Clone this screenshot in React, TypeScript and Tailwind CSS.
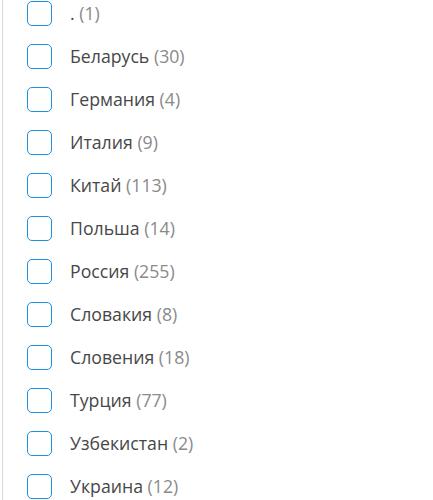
import React from "react";

const items: [string, number][] = [
  [".", 1],
  ["Беларусь", 30],
  ["Германия", 4],
  ["Италия", 9],
  ["Китай", 113],
  ["Польша", 14],
  ["Россия", 255],
  ["Словакия", 8],
  ["Словения", 18],
  ["Турция", 77],
  ["Узбекистан", 2],
  ["Украина", 12],
];

export default function App() {
  return (
    <div className="w-[433px] h-[500px] overflow-hidden bg-white" style={{ fontFamily: '"Open Sans", "Noto Sans", sans-serif' }}>
      <div className="ml-[2px] border-l border-[#d5d8dc] pl-[24px] pt-[1px] flex flex-col gap-[19px] min-h-[520px]">
        {items.map(([name, n]) => (
          <label key={name} className="flex items-center gap-[18px] h-[24px]">
            <span className="w-[25px] h-[25px] rounded-[5px] border-[1.5px] border-[#1e90e0] bg-white shrink-0" />
            <span className="text-[17.7px] text-[#474747] leading-none mt-[2px]">
              {name} <span className="text-[#8a8a8a]">({n})</span>
            </span>
          </label>
        ))}
      </div>
    </div>
  );
}
